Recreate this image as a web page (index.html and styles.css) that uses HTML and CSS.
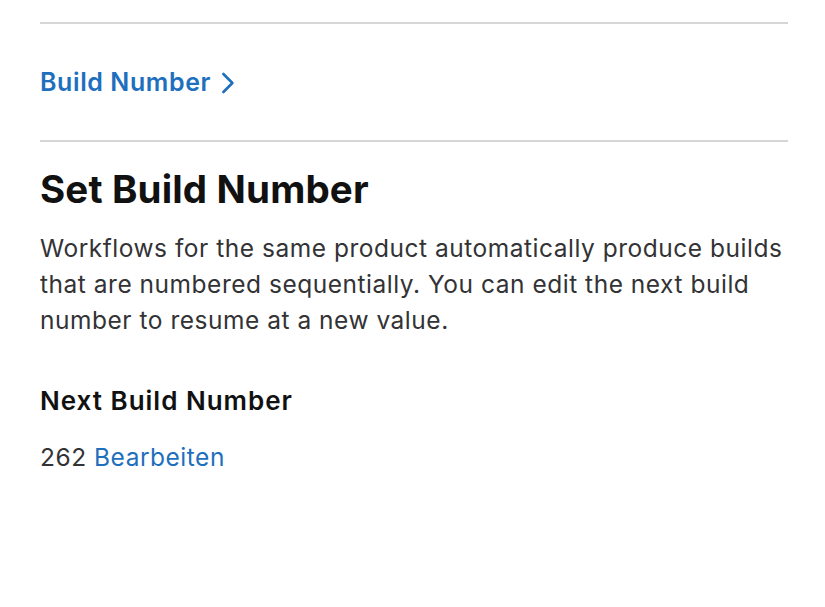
FILE: index.html
```html
<!DOCTYPE html>
<html lang="en">
<head>
<meta charset="utf-8">
<title>Set Build Number</title>
<link rel="stylesheet" href="styles.css">
</head>
<body>
<main class="page">
  <hr class="divider">
  <div class="link-row">
    <a class="nav-link" href="#">Build Number<svg class="chevron" viewBox="0 0 14 22" aria-hidden="true"><path d="M2.4 2 L11.4 11 L2.4 20" fill="none" stroke="currentColor" stroke-width="2.6" stroke-linecap="round" stroke-linejoin="round"/></svg></a>
  </div>
  <hr class="divider">
  <section class="section">
    <h1 class="title">Set Build Number</h1>
    <p class="description">Workflows for the same product automatically produce builds that are numbered sequentially. You can edit the next build number to resume at a new value.</p>
    <h2 class="label">Next Build Number</h2>
    <p class="value">262 <a class="edit-link" href="#">Bearbeiten</a></p>
  </section>
</main>
</body>
</html>
```
FILE: styles.css
```css
html, body {
  margin: 0;
  padding: 0;
  background: #ffffff;
}
body {
  font-family: Inter, "Noto Sans", "Liberation Sans", sans-serif;
  color: #1d1d1f;
}
.page {
  width: 748px;
  margin-left: 40px;
  padding-top: 22px;
}
.divider {
  border: 0;
  height: 2px;
  background: #d6d6d6;
  margin: 0;
}
.link-row {
  padding: 38px 0;
  height: 40px;
  display: flex;
  align-items: center;
}
.nav-link {
  display: inline-flex;
  align-items: center;
  gap: 10px;
  color: #1e6fbd;
  font-size: 25px;
  line-height: 40px;
  font-weight: 600;
  text-decoration: none;
  letter-spacing: 0.6px;
}
.chevron {
  width: 14px;
  height: 22px;
  margin-top: 1px;
}
.section {
  padding-top: 24px;
}
.title {
  margin: 0;
  font-size: 38.5px;
  font-weight: 700;
  line-height: 46px;
  color: #111111;
  letter-spacing: 0.15px;
}
.description {
  margin: 18px 0 0;
  font-size: 24.5px;
  line-height: 36px;
  color: #333336;
  letter-spacing: 0.52px;
}
.label {
  margin: 45px 0 0;
  font-size: 26px;
  font-weight: 600;
  line-height: 36px;
  color: #111111;
  letter-spacing: 1px;
}
.value {
  margin: 20px 0 0;
  font-size: 24.5px;
  line-height: 36px;
  color: #333336;
  letter-spacing: 0.52px;
}
.edit-link {
  color: #1e6fbd;
  text-decoration: none;
}
```
